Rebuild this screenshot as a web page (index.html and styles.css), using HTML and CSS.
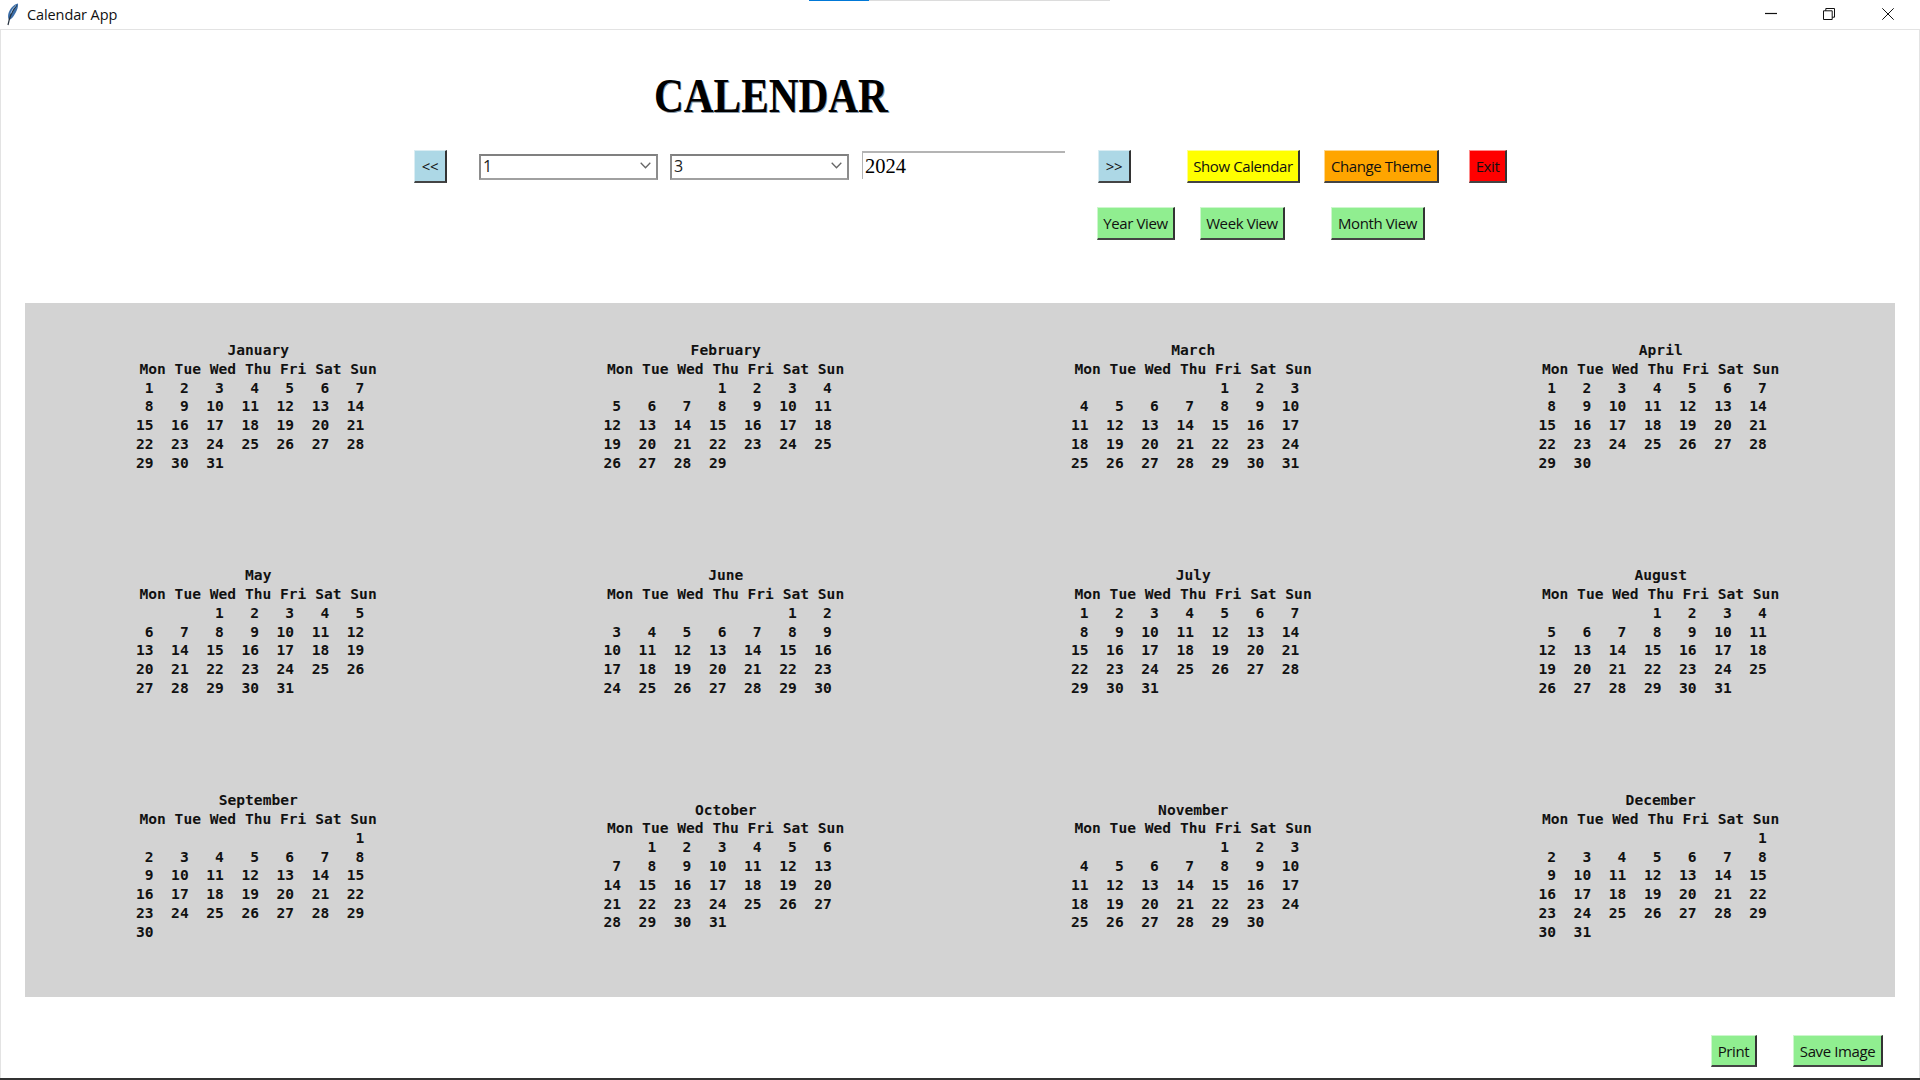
FILE: index.html
```html
<!DOCTYPE html>
<html lang="en">
<head>
<meta charset="utf-8">
<title>Calendar App</title>
<link rel="stylesheet" href="styles.css">
</head>
<body>
<div class="topline"><span class="tl-blue"></span><span class="tl-gray"></span></div>
<div class="window">
  <header class="titlebar">
    <svg class="feather" width="16" height="24" viewBox="0 0 16 24"><path d="M14 1.500C9.500 2.500 5.500 7 4.300 12c-.5 2.500-.2 4.500.7 6 1.500-.3 3.500-2 5-4.500C12 10.500 14.500 6 14 1.500z" fill="#3c6ea8"/><path d="M12.500 3.500C9.500 7 7 11.500 5.300 17.500L4 23" fill="none" stroke="#26323f" stroke-width="1.200"/><path d="M12 3.500c-2 1.500-4 4.500-5.300 8" fill="none" stroke="#9cc0e4" stroke-width="1"/></svg>
    <span class="apptitle">Calendar App</span>
    <div class="winctl">
      <svg width="12" height="12" viewBox="0 0 12 12"><path d="M0 5.500h12" stroke="#111" stroke-width="1.200" fill="none"/></svg>
      <svg width="12" height="12" viewBox="0 0 12 12"><path d="M.5 2.800h8.700v8.700H.5zM2.800 2.800V.5h8.700v8.700H9.200" stroke="#111" fill="none"/></svg>
      <svg width="12" height="12" viewBox="0 0 12 12"><path d="M.3.300l11.400 11.400M11.700.300L.3 11.700" stroke="#111" fill="none"/></svg>
    </div>
  </header>
  <main class="content">
    <div class="titlerow"><h1 class="heading">CALENDAR</h1></div>
    <div class="toolbar">
      <button class="btn blue w-prev">&lt;&lt;</button>
      <div class="combo c-first"><span>1</span><svg width="11" height="7" viewBox="0 0 11 7"><path d="M.7.700l4.800 5 4.800-5" fill="none" stroke="#666" stroke-width="1.300"/></svg></div>
      <div class="combo c-second"><span>3</span><svg width="11" height="7" viewBox="0 0 11 7"><path d="M.7.700l4.800 5 4.800-5" fill="none" stroke="#666" stroke-width="1.300"/></svg></div>
      <div class="entry">2024</div>
      <button class="btn blue w-next">&gt;&gt;</button>
      <button class="btn yellow w-show">Show Calendar</button>
      <button class="btn orange w-theme">Change Theme</button>
      <button class="btn red w-exit">Exit</button>
    </div>
    <div class="viewbar">
      <button class="btn green w-year">Year View</button>
      <button class="btn green w-week">Week View</button>
      <button class="btn green w-month">Month View</button>
    </div>
    <section class="panel">
<div class="month"><div class="mname">January</div><div class="dow">Mon Tue Wed Thu Fri Sat Sun</div><pre class="weeks"> 1   2   3   4   5   6   7
 8   9  10  11  12  13  14
15  16  17  18  19  20  21
22  23  24  25  26  27  28
29  30  31</pre></div>
<div class="month"><div class="mname">February</div><div class="dow">Mon Tue Wed Thu Fri Sat Sun</div><pre class="weeks">             1   2   3   4
 5   6   7   8   9  10  11
12  13  14  15  16  17  18
19  20  21  22  23  24  25
26  27  28  29</pre></div>
<div class="month"><div class="mname">March</div><div class="dow">Mon Tue Wed Thu Fri Sat Sun</div><pre class="weeks">                 1   2   3
 4   5   6   7   8   9  10
11  12  13  14  15  16  17
18  19  20  21  22  23  24
25  26  27  28  29  30  31</pre></div>
<div class="month"><div class="mname">April</div><div class="dow">Mon Tue Wed Thu Fri Sat Sun</div><pre class="weeks"> 1   2   3   4   5   6   7
 8   9  10  11  12  13  14
15  16  17  18  19  20  21
22  23  24  25  26  27  28
29  30</pre></div>
<div class="month"><div class="mname">May</div><div class="dow">Mon Tue Wed Thu Fri Sat Sun</div><pre class="weeks">         1   2   3   4   5
 6   7   8   9  10  11  12
13  14  15  16  17  18  19
20  21  22  23  24  25  26
27  28  29  30  31</pre></div>
<div class="month"><div class="mname">June</div><div class="dow">Mon Tue Wed Thu Fri Sat Sun</div><pre class="weeks">                     1   2
 3   4   5   6   7   8   9
10  11  12  13  14  15  16
17  18  19  20  21  22  23
24  25  26  27  28  29  30</pre></div>
<div class="month"><div class="mname">July</div><div class="dow">Mon Tue Wed Thu Fri Sat Sun</div><pre class="weeks"> 1   2   3   4   5   6   7
 8   9  10  11  12  13  14
15  16  17  18  19  20  21
22  23  24  25  26  27  28
29  30  31</pre></div>
<div class="month"><div class="mname">August</div><div class="dow">Mon Tue Wed Thu Fri Sat Sun</div><pre class="weeks">             1   2   3   4
 5   6   7   8   9  10  11
12  13  14  15  16  17  18
19  20  21  22  23  24  25
26  27  28  29  30  31</pre></div>
<div class="month"><div class="mname">September</div><div class="dow">Mon Tue Wed Thu Fri Sat Sun</div><pre class="weeks">                         1
 2   3   4   5   6   7   8
 9  10  11  12  13  14  15
16  17  18  19  20  21  22
23  24  25  26  27  28  29
30</pre></div>
<div class="month"><div class="mname">October</div><div class="dow">Mon Tue Wed Thu Fri Sat Sun</div><pre class="weeks">     1   2   3   4   5   6
 7   8   9  10  11  12  13
14  15  16  17  18  19  20
21  22  23  24  25  26  27
28  29  30  31</pre></div>
<div class="month"><div class="mname">November</div><div class="dow">Mon Tue Wed Thu Fri Sat Sun</div><pre class="weeks">                 1   2   3
 4   5   6   7   8   9  10
11  12  13  14  15  16  17
18  19  20  21  22  23  24
25  26  27  28  29  30</pre></div>
<div class="month"><div class="mname">December</div><div class="dow">Mon Tue Wed Thu Fri Sat Sun</div><pre class="weeks">                         1
 2   3   4   5   6   7   8
 9  10  11  12  13  14  15
16  17  18  19  20  21  22
23  24  25  26  27  28  29
30  31</pre></div>
    </section>
    <div class="footerbar">
      <button class="btn green w-print">Print</button>
      <button class="btn green w-save">Save Image</button>
    </div>
  </main>
</div>
<div class="bottomline"></div>
</body>
</html>
```
FILE: styles.css
```css
* { box-sizing: border-box; }
html, body { margin: 0; height: 100%; }
body {
  width: 1920px;
  height: 1080px;
  overflow: hidden;
  background: #fff;
  font-family: "Open Sans", "Noto Sans", sans-serif;
  display: flex;
  flex-direction: column;
  position: relative;
}
.topline {
  position: absolute;
  top: 0;
  left: 809px;
  display: flex;
  height: 1px;
}
.tl-blue { width: 60px; background: #0078d7; }
.tl-gray { width: 241px; background: #dcdcdc; }
.window {
  flex: 1;
  display: flex;
  flex-direction: column;
  min-height: 0;
}
.titlebar {
  height: 30px;
  flex: none;
  display: flex;
  align-items: center;
  border-bottom: 1px solid #e3e3e3;
  padding-left: 4px;
}
.feather { margin-top: -2px; }
.apptitle {
  font-size: 14.500px;
  color: #111;
  margin-left: 7px;
  letter-spacing: -0.1px;
  margin-top: -1px;
}
.winctl {
  margin-left: auto;
  display: flex;
  gap: 46px;
  padding-right: 26px;
  margin-top: -2px;
}
.winctl svg:last-child { margin-left: 1px; }
.content {
  flex: 1;
  display: flex;
  flex-direction: column;
  border-left: 1px solid #e3e3e3;
  border-right: 1px solid #e3e3e3;
  min-height: 0;
}
.titlerow {
  height: 120px;
  flex: none;
  padding: 41px 0 0 653px;
}
.heading {
  margin: 0;
  display: inline-block;
  font-family: "Liberation Serif", serif;
  font-weight: bold;
  font-size: 48px;
  line-height: 50px;
  color: #000;
  transform: scaleX(0.86);
  transform-origin: left center;
  text-shadow: 1px 1px 0 #8a9aa8;
  white-space: nowrap;
}
.toolbar {
  display: flex;
  align-items: center;
  height: 33px;
  flex: none;
  padding-left: 413px;
}
.viewbar {
  display: flex;
  height: 33px;
  flex: none;
  margin-top: 24px;
  padding-left: 1096px;
}
.btn {
  height: 33px;
  padding: 0;
  font-family: inherit;
  font-size: 15px;
  letter-spacing: -0.4px;
  color: #111;
  white-space: nowrap;
  border-style: solid;
  border-width: 1px 2px 2px 1px;
  border-color: rgba(255,255,255,.55) #333 #444 rgba(255,255,255,.55);
}
.blue { background: #add8e6; }
.yellow { background: #ffff00; }
.orange { background: #ffa500; }
.red { background: #ff0000; }
.green { background: #90ee90; }
.w-prev { width: 33px; }
.w-next { width: 33px; margin-left: 33px; }
.w-show { width: 113px; margin-left: 56px; }
.w-theme { width: 115px; margin-left: 24px; }
.w-exit { width: 38px; margin-left: 30px; }
.w-year { width: 78px; }
.w-week { width: 85px; margin-left: 25px; }
.w-month { width: 94px; margin-left: 46px; }
.w-print { width: 46px; height: 32px; }
.w-save { width: 90px; height: 32px; margin-left: 36px; }
.combo {
  width: 179px;
  height: 26px;
  display: flex;
  align-items: center;
  justify-content: space-between;
  padding: 0 5px 2px 2px;
  border: 2px solid #8c8c8c;
  border-bottom-color: #a0a0a0;
  border-top-color: #808080;
  font-size: 16px;
  color: #222;
}
.c-first { margin-left: 32px; }
.c-second { margin-left: 12px; }
.entry {
  width: 203px;
  height: 28px;
  margin-left: 13px;
  margin-top: -3px;
  padding-left: 2px;
  border-top: 2px solid #b4b4b4;
  border-left: 1px solid #b4b4b4;
  font-family: "Liberation Serif", serif;
  font-size: 20.500px;
  line-height: 26px;
  color: #000;
}
.panel {
  flex: none;
  width: 1870px;
  margin: 63px 0 0 24px;
  height: 694px;
  background: #d3d3d3;
  display: grid;
  grid-template-columns: repeat(4, 1fr);
  align-items: center;
  justify-items: center;
}
.month {
  width: 237.600px;
  margin-right: 1px;
  padding: 38px 0 55.400px;
  font-family: "DejaVu Sans Mono", monospace;
  font-weight: bold;
  font-size: 14.600px;
  line-height: 18.800px;
  color: #111;
}
.mname { text-align: center; }
.dow { white-space: pre; }
.weeks {
  margin: 0 0 0 -3.500px;
  font: inherit;
  line-height: inherit;
}
.footerbar {
  display: flex;
  flex: none;
  margin-top: 38px;
  padding-left: 1710px;
}
.bottomline {
  position: absolute;
  left: 0;
  right: 0;
  bottom: 0;
  height: 2px;
  background: #333;
}
```
